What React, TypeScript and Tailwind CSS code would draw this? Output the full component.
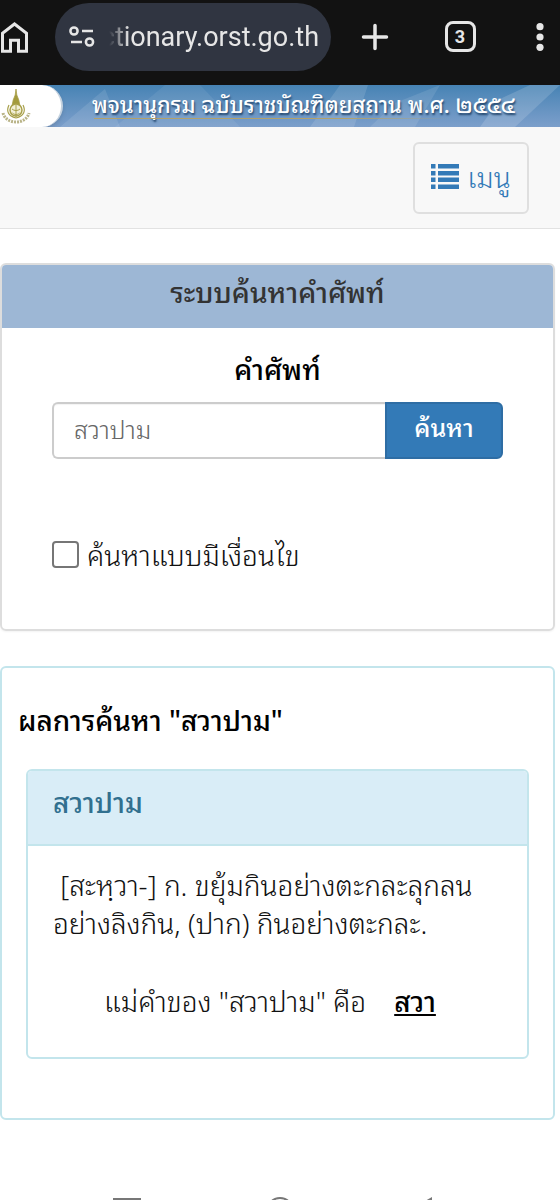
// ─── Dictionary Search Page ──────────────────────────────
import { useState } from 'react'

function BrowserBar() {
  return (
    <header className="flex h-[85px] items-start bg-[#121212] pt-[3px] text-[#e6e6e6]">
      <button aria-label="Home" className="mt-[17px] w-[55px] shrink-0">
        <svg width="30" height="34" viewBox="0 0 30 34" fill="none" stroke="currentColor" strokeWidth="3">
          <path d="M2.5 31.2V13.2L14.5 4l12 9.2v18h-8v-11h-8v11z" />
        </svg>
      </button>
      <div className="flex h-[68px] w-[276px] min-w-0 items-center rounded-full bg-[#303541] pl-3.5 pr-3">
        <svg className="shrink-0" width="26" height="22" viewBox="0 0 26 22" fill="none" stroke="currentColor" strokeWidth="2.5">
          <circle cx="5" cy="5" r="3.6" />
          <path d="M13 5h11M2 16h11" />
          <circle cx="20.5" cy="16" r="3.6" />
        </svg>
        <div className="flex flex-1 justify-end mask-[linear-gradient(to_right,transparent_14px,black_34px)]">
          <span className="whitespace-nowrap font-[Roboto,sans-serif] text-[27px]">ctionary.orst.go.th</span>
        </div>
      </div>
      <div className="mt-[18px] flex flex-1 items-center justify-between pl-[30px] pr-4">
        <button aria-label="New tab">
          <svg width="28" height="28" viewBox="0 0 28 28" stroke="currentColor" strokeWidth="3.5" strokeLinecap="round">
            <path d="M14 2.5v23M2.5 14h23" />
          </svg>
        </button>
        <button
          aria-label="Tabs"
          className="mr-[5px] flex size-[31px] items-center justify-center rounded-lg border-[3px] border-[#e6e6e6] font-[Roboto,sans-serif] text-lg font-bold"
        >
          3
        </button>
        <button aria-label="More">
          <svg width="8" height="28" viewBox="0 0 8 28" fill="currentColor">
            <circle cx="4" cy="3.7" r="3.6" />
            <circle cx="4" cy="14" r="3.6" />
            <circle cx="4" cy="24.3" r="3.6" />
          </svg>
        </button>
      </div>
    </header>
  )
}

function Emblem() {
  return (
    <svg width="32" height="40" viewBox="0 0 32 40" fill="none" stroke="#a8a04a">
      <path d="M16 3l.8 6 2 5 1 5h-7.6l1-5 2-5z" fill="#a39a3c" strokeWidth="0.8" />
      <circle cx="16" cy="24" r="6" strokeWidth="1.5" fill="#f3f0d8" />
      <path d="M12 23c2 2 6 2 8 0M12.5 27c2 2 5 2 7 0M16 19v12" strokeWidth="1" />
      <path d="M9 19c-3 6-1 11 7 13M23 19c3 6 1 11-7 13" strokeWidth="1.2" />
      <path d="M3 27c3 12 23 12 26 0" stroke="#b9b488" strokeWidth="3" strokeDasharray="2 1" />
    </svg>
  )
}

function Banner() {
  return (
    <div className="relative flex h-[42px] overflow-hidden bg-linear-to-b from-[#4683b4] to-[#7c9fcb]">
      <svg className="absolute inset-0 h-full w-full" viewBox="0 0 560 42" preserveAspectRatio="none" fill="#fff">
        <path d="M60 42L105 4l15 38z" opacity=".1" />
        <path d="M115 42L165 0h35l40 42z" opacity=".07" />
        <path d="M310 42L340 0h28l-14 42z" opacity=".12" />
        <path d="M370 42l25-24 45-18-25 42z" opacity=".1" />
        <path d="M480 42L500 14 530 0h30L515 42z" opacity=".15" />
      </svg>
      <div className="relative flex w-[63px] shrink-0 items-center rounded-r-full border-r-2 border-[#c5d2df] bg-white shadow-md">
        <Emblem />
      </div>
      <div className="relative flex flex-1 flex-col items-center pr-4">
        <h1 className="text-[22px] leading-[36px] font-medium whitespace-nowrap text-white text-shadow-[1px_2px_2px_#23466d]">
          พจนานุกรม ฉบับราชบัณฑิตยสถาน พ.ศ. ๒๕๕๔
        </h1>
        <div className="-mt-[3px] h-px w-[420px] max-w-full bg-linear-to-r from-[#b3a16a] from-60% to-transparent to-85%" />
      </div>
    </div>
  )
}

function MenuBar() {
  return (
    <nav className="flex h-[102px] items-start justify-end border-b border-[#e2e2e2] bg-[#f8f8f8] pt-[15px] pr-[31px]">
      <button className="flex h-[72px] w-[116px] items-start justify-center gap-2 rounded-md border-2 border-[#dfdfdf] pt-3 text-[28px] leading-[40px] font-light text-[#337ab7]">
        <svg className="mt-2" width="28" height="25" viewBox="0 0 28 25" fill="currentColor">
          <path d="M0 0h4.5v4.5H0zM7 0h21v4.5H7zM0 7h4.5v4.5H0zM7 7h21v4.5H7zM0 13.5h4.5V18H0zM7 13.5h21V18H7zM0 20.5h4.5V25H0zM7 20.5h21V25H7z" />
        </svg>
        เมนู
      </button>
    </nav>
  )
}

function SearchPanel() {
  const [word, setWord] = useState('')
  const [advanced, setAdvanced] = useState(false)

  return (
    <form
      onSubmit={(e) => e.preventDefault()}
      className="h-[368px] overflow-hidden rounded-md border-2 border-[#dddddd] shadow-xs"
    >
      <h2 className="h-[63px] bg-[#9db7d5] text-center text-[28px] leading-[52px] font-medium text-[#333]">
        ระบบค้นหาคำศัพท์
      </h2>
      <div className="px-[50px] pt-[18px]">
        <label htmlFor="word" className="block text-center text-[28px] leading-[44px] font-medium text-black">
          คำศัพท์
        </label>
        <div className="mt-3 flex h-[57px]">
          <input
            id="word"
            value={word}
            onChange={(e) => setWord(e.target.value)}
            placeholder="สวาปาม"
            className="min-w-0 flex-1 rounded-l-md border-2 border-r-0 border-[#cccccc] px-5 pb-1 text-[25px] font-light inset-shadow-xs outline-none placeholder:text-[#666]"
          />
          <button className="w-[118px] rounded-r-md border-2 border-[#2e6da4] bg-[#337ab7] pb-2 text-[25px] font-medium text-white">
            ค้นหา
          </button>
        </div>
        <label className="mt-[73px] flex items-center gap-2 text-[28px] leading-[44px] font-light">
          <input
            type="checkbox"
            checked={advanced}
            onChange={(e) => setAdvanced(e.target.checked)}
            className="size-[27px] appearance-none rounded-sm border-2 border-[#767676] bg-white checked:bg-[#337ab7]"
          />
          ค้นหาแบบมีเงื่อนไข
        </label>
      </div>
    </form>
  )
}

function ResultPanel() {
  return (
    <section className="h-[454px] rounded-md border-2 border-[#c3e5ec]">
      <h2 className="px-4 pt-7 text-[28px] leading-[46px] font-medium text-black">ผลการค้นหา "สวาปาม"</h2>
      <article className="mx-6 mt-[27px] h-[290px] overflow-hidden rounded-md border-2 border-[#c3e5ec]">
        <h3 className="h-[75px] border-b-2 border-[#c3e5ec] bg-[#d9edf7] px-[25px] text-[28px] leading-[60px] font-medium text-[#31708f]">
          สวาปาม
        </h3>
        <div className="px-[25px] pt-[19px] text-[28px] leading-[38px] font-light">
          <p className="whitespace-nowrap">
            &nbsp;[สะหฺวา-] ก. ขยุ้มกินอย่างตะกละลุกลน
            <br />
            อย่างลิงกิน, (ปาก) กินอย่างตะกละ.
          </p>
          <p className="mt-10 pl-[51px]">
            แม่คำของ "สวาปาม" คือ
            <a href="#sawa" className="ml-7 font-medium text-black underline">
              สวา
            </a>
          </p>
        </div>
      </article>
    </section>
  )
}

// Top edge of the phone's navigation keys
function SystemKeys() {
  return (
    <footer className="mt-[76px] flex justify-around px-[50px] text-[#777]">
      <svg width="28" height="5" viewBox="0 0 28 5" fill="none" stroke="currentColor" strokeWidth="2">
        <path d="M1 8V3h26v5" />
      </svg>
      <svg width="28" height="5" viewBox="0 0 28 5" fill="none" stroke="currentColor" strokeWidth="2">
        <circle cx="14" cy="15" r="13" />
      </svg>
      <svg width="28" height="5" viewBox="0 0 28 5" fill="currentColor">
        <path d="M6 5l7-4v4z" />
      </svg>
    </footer>
  )
}

export default function App() {
  return (
    <div className="overflow-hidden bg-white font-['Noto_Sans_Thai_Looped','Noto_Sans','Noto_Sans_Thai',sans-serif] text-[#111]">
      <BrowserBar />
      <Banner />
      <MenuBar />
      <main className="flex flex-col gap-[35px] pt-[34px] pr-[5px]">
        <SearchPanel />
        <ResultPanel />
      </main>
      <SystemKeys />
    </div>
  )
}
